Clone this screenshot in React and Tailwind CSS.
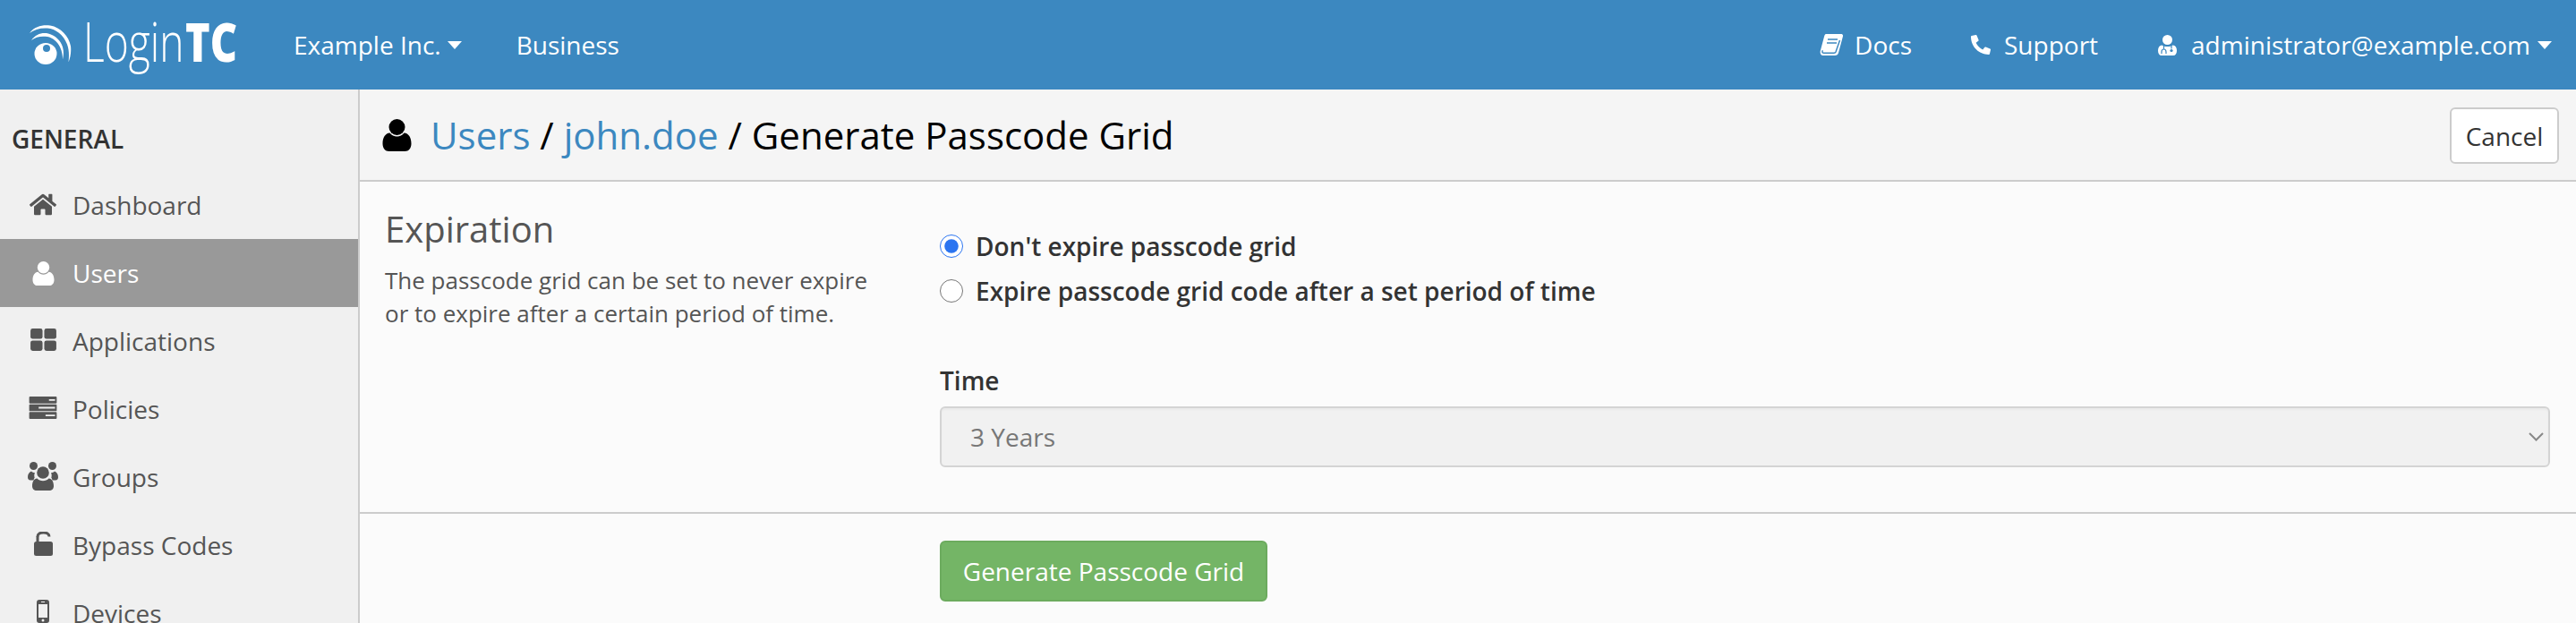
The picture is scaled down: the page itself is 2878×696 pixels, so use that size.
import React from "react";
import { FaPhoneAlt, FaHome } from "react-icons/fa";

const UserIcon = ({ className }) => (
  <svg viewBox="0 0 32 36" className={className} fill="currentColor">
    <circle cx="16" cy="9" r="9" />
    <path d="M8 15.500c2 2.500 5 4 8 4s6-1.500 8-4c5 .5 8 5 8 12 0 5-3 8.500-7 8.500H7c-4 0-7-3.500-7-8.500 0-7 3-11.500 8-12z" />
  </svg>
);

const GridIcon = ({ className }) => (
  <svg viewBox="0 0 30 26" className={className} fill="currentColor">
    <rect x="0" y="0" width="14" height="12" rx="2.500" />
    <rect x="16" y="0" width="14" height="12" rx="2.500" />
    <rect x="0" y="14" width="14" height="12" rx="2.500" />
    <rect x="16" y="14" width="14" height="12" rx="2.500" />
  </svg>
);

const ServerIcon = ({ className }) => (
  <svg viewBox="0 0 32 26" className={className} fill="currentColor" fillRule="evenodd">
    <path d="M1 0h30a1 1 0 0 1 1 1v6a1 1 0 0 1-1 1H1a1 1 0 0 1-1-1V1a1 1 0 0 1 1-1zm22 3v2h7V3z" />
    <path d="M1 9h30a1 1 0 0 1 1 1v6a1 1 0 0 1-1 1H1a1 1 0 0 1-1-1v-6a1 1 0 0 1 1-1zm10 3v2h19v-2z" />
    <path d="M1 18h30a1 1 0 0 1 1 1v6a1 1 0 0 1-1 1H1a1 1 0 0 1-1-1v-6a1 1 0 0 1 1-1zm18 3v2h11v-2z" />
  </svg>
);

const GroupIcon = ({ className }) => (
  <svg viewBox="0 0 34 32" className={className} fill="currentColor">
    <circle cx="6.500" cy="4.500" r="4.500" />
    <circle cx="27.500" cy="4.500" r="4.500" />
    <path d="M4 10.500c1 1 2.500 1.700 4 1.800-.8 1.500-1 3.500-.3 5.300-.5.800-.9 1.800-1.200 2.900H3c-2 0-3-1.500-3-3.500 0-3 1.500-5.800 4-6.500z" />
    <path d="M30 10.500c-1 1-2.500 1.700-4 1.800.8 1.500 1 3.500.3 5.300.5.800.9 1.800 1.200 2.900H31c2 0 3-1.500 3-3.500 0-3-1.500-5.800-4-6.500z" />
    <circle cx="17" cy="12" r="6.800" />
    <path d="M10.500 18.500c1.500 1.700 4 2.700 6.500 2.700s5-1 6.500-2.700c3.500.5 5.500 3.500 5.500 8.500 0 3-2 5-5 5H10c-3 0-5-2-5-5 0-5 2-8 5.500-8.500z" />
  </svg>
);

const UnlockIcon = ({ className }) => (
  <svg viewBox="0 0 21 27" className={className} fill="currentColor">
    <path d="M4 5.500C4 2.500 7 1 10.500 1S17 2.500 17 5.500" fill="none" stroke="currentColor" strokeWidth="3" />
    <rect x="2.500" y="5" width="3" height="7" />
    <rect x="0" y="11" width="21" height="16" rx="2.500" />
  </svg>
);

const MobileIcon = ({ className }) => (
  <svg viewBox="0 0 14 26" className={className} fill="currentColor" fillRule="evenodd">
    <path d="M3 0h8a3 3 0 0 1 3 3v20a3 3 0 0 1-3 3H3a3 3 0 0 1-3-3V3a3 3 0 0 1 3-3zM2 5v15h10V5zM5 2v1h4V2zm2 19.500a1.500 1.500 0 1 0 0 3 1.500 1.500 0 0 0 0-3z" />
  </svg>
);

const BookIcon = ({ className }) => (
  <svg viewBox="0 0 26 24" className={className}>
    <path fill="white" d="M7 0h17c1.500 0 2.300 1.200 2 2.500L21 21c-.4 2-2 3-4 3H4c-3 0-4-3-3-6L5 3c.3-1.500 1-3 2-3z" />
    <path fill="none" stroke="#3c88c0" strokeWidth="1.500" d="M9 6h11M8 10h11M22.500 7L18 20c-.4 1-1 1.300-2 1.300H5c-2 0-2.500-1-1.700-3" />
  </svg>
);

const DoctorIcon = ({ className }) => (
  <svg viewBox="0 0 21 23" className={className} fill="white">
    <circle cx="10.500" cy="5.500" r="5.500" />
    <path d="M4.500 11.500c1.500 1 3.700 1.500 6 1.500s4.500-.5 6-1.500c3 .3 4.500 2.500 4.500 6 0 3.500-1.500 5.500-4 5.500H4c-2.500 0-4-2-4-5.500s1.500-5.700 4.500-6z" />
    <path d="M6.500 12v3.500M15 12v3.500M4 21v-2c0-1.500 1-3 2.500-3s2.500 1.500 2.500 3v2" fill="none" stroke="#3c88c0" strokeWidth="1.200" />
    <circle cx="15" cy="17.500" r="1.600" fill="#3c88c0" />
  </svg>
);

const LogoMark = () => (
  <svg viewBox="0 0 47 44" className="w-[47px] h-[44px]">
    <path fill="white" d="M0 9C6 1 15-.500 23 .500c12 2 21 12 23 23 .800 7-.500 13-2.500 18 .800-7 .800-14-1.500-20C38 11 29 4 20 3.500 12 3 5 5 0 9z" />
    <path fill="white" d="M2 17C7 10 14 8 21 9.500c8 2 14 8 16 15 1.500 5 1 10 0 14 0-4-.500-9-3-14-3-6-8-10.500-14-11.500C13 12 7 13 2 17z" />
    <ellipse cx="18" cy="32" rx="12.500" ry="12" fill="white" />
    <circle cx="19" cy="26" r="4" fill="#3c88c0" />
  </svg>
);

const Caret = ({ className = "" }) => (
  <span className={`inline-block w-0 h-0 border-x-[8px] border-x-transparent border-t-[9px] border-t-white ${className}`} />
);

const navItems = [
  { label: "Dashboard", icon: <FaHome className="w-[30px] h-[27px] -translate-y-[1px]" /> },
  { label: "Users", icon: <UserIcon className="w-[25px] h-[27px]" />, active: true },
  { label: "Applications", icon: <GridIcon className="w-[29px] h-[25px] -translate-y-[2px]" /> },
  { label: "Policies", icon: <ServerIcon className="w-[32px] h-[25px] -translate-y-[2px]" /> },
  { label: "Groups", icon: <GroupIcon className="w-[34px] h-[32px] -translate-y-[1px]" /> },
  { label: "Bypass Codes", icon: <UnlockIcon className="w-[21px] h-[27px] -translate-y-[2px]" /> },
  { label: "Devices", icon: <MobileIcon className="w-[14px] h-[26px] -translate-y-[2px]" /> },
];

export default function App() {
  return (
    <div className="h-[696px] overflow-hidden flex flex-col bg-[#fbfbfb] text-[28px] text-[#333] font-['Open_Sans',sans-serif]">
      <header className="h-[100px] shrink-0 flex items-center bg-[#3c88c0] text-white">
        <div className="ml-[33px] w-[295px] flex items-center">
          <LogoMark />
          <span className="ml-[13px] w-[114px] text-[60px] leading-none font-light scale-x-[.77] origin-left -translate-y-[4px]">Login</span>
          <span className="w-[58px] text-[60px] leading-none font-extrabold scale-x-[.78] origin-left -translate-y-[4px]">TC</span>
        </div>
        <a className="flex items-center gap-[7px]">
          Example Inc.
          <Caret />
        </a>
        <a className="ml-[61px]">Business</a>
        <nav className="ml-auto mr-[27px] flex items-center">
          <BookIcon className="w-[26px] h-[24px]" />
          <a className="ml-[13px]">Docs</a>
          <FaPhoneAlt className="ml-[66px] w-[22px] h-[22px]" />
          <a className="ml-[15px]">Support</a>
          <DoctorIcon className="ml-[67px] w-[21px] h-[23px]" />
          <a className="ml-[16px]">administrator@example.com</a>
          <Caret className="ml-[8px]" />
        </nav>
      </header>

      <div className="flex flex-1 min-h-0">
        <aside className="w-[402px] shrink-0 bg-[#f0f0f0] border-r-2 border-[#ccc] text-[#555]">
          <h4 className="h-[91px] pt-[37px] pl-[13px] text-[28px] leading-[36px] font-semibold text-[#333]">GENERAL</h4>
          <ul>
            {navItems.map((item) => (
              <li
                key={item.label}
                className={`h-[76px] flex items-center ${item.active ? "bg-[#999] text-white" : ""}`}
              >
                <span className="w-[81px] pl-[31px] shrink-0">
                  <span className="w-[34px] flex justify-center">{item.icon}</span>
                </span>
                {item.label}
              </li>
            ))}
          </ul>
        </aside>

        <main className="flex-1 min-w-0">
          <div className="h-[103px] flex items-center justify-between pl-[25px] pr-[19px] bg-[#f5f5f5] border-b-2 border-[#ccc]">
            <h1 className="flex items-center text-[42px] leading-none text-black">
              <UserIcon className="w-[33px] h-[36px] mr-[21px]" />
              <span>
                <a className="text-[#3c88c0]">Users</a> / <a className="text-[#3c88c0]">john.doe</a> / Generate Passcode Grid
              </span>
            </h1>
            <button className="h-[63px] w-[122px] mt-[2px] rounded-[6px] border-2 border-[#ccc] bg-white text-[#333]">Cancel</button>
          </div>

          <section className="h-[371px] flex border-b-2 border-[#ccc]">
            <div className="w-[648px] shrink-0 pl-[28px] pt-[31px]">
              <h3 className="text-[40px] leading-[44px] text-[#555]">Expiration</h3>
              <p className="mt-[17px] w-[560px] text-[26px] leading-[37px] text-[#555]">
                The passcode grid can be set to never expire or to expire after a certain period of time.
              </p>
            </div>
            <div className="flex-1 min-w-0 pr-[29px] pt-[47px]">
              <label className="h-[50px] flex items-center gap-[14px] font-semibold">
                <input type="radio" name="expire" defaultChecked className="w-[26px] h-[26px] m-0 accent-[#2b74f0]" />
                Don't expire passcode grid
              </label>
              <label className="h-[50px] flex items-center gap-[14px] font-semibold">
                <input type="radio" name="expire" className="w-[26px] h-[26px] m-0" />
                Expire passcode grid code after a set period of time
              </label>
              <div className="mt-[56px] font-semibold leading-[38px]">Time</div>
              <div className="mt-[10px] h-[68px] px-[32px] flex items-center justify-between rounded-[6px] border-2 border-[#d4d4d4] bg-[#f1f1f1] shadow-[inset_0_2px_2px_rgba(0,0,0,0.03)] text-[#777]">
                3 Years
                <svg viewBox="0 0 17 10" className="w-[17px] h-[10px] -mr-[27px]" fill="none" stroke="#888" strokeWidth="2">
                  <path d="M1 1l7.500 7.500L16 1" />
                </svg>
              </div>
            </div>
          </section>

          <div className="pl-[648px] pt-[30px]">
            <button className="h-[68px] w-[366px] rounded-[6px] bg-[#74b566] border-2 border-[#6cab5e] text-white">
              Generate Passcode Grid
            </button>
          </div>
        </main>
      </div>
    </div>
  );
}
